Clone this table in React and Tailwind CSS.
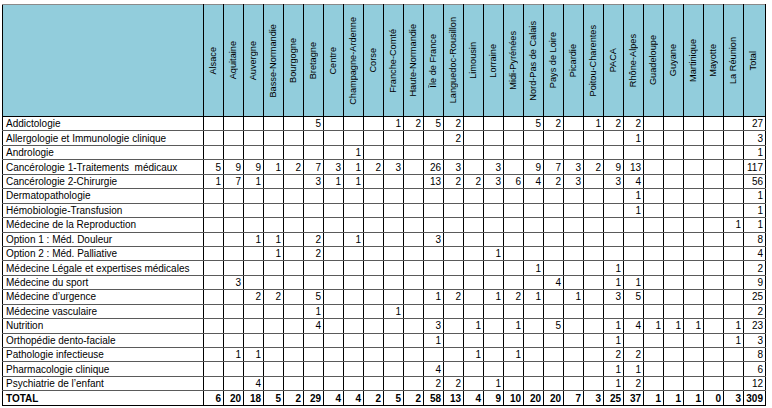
import React from "react";

const regions = [
  "Alsace",
  "Aquitaine",
  "Auvergne",
  "Basse-Normandie",
  "Bourgogne",
  "Bretagne",
  "Centre",
  "Champagne-Ardenne",
  "Corse",
  "Franche-Comté",
  "Haute-Normandie",
  "Île de France",
  "Languedoc-Rousillon",
  "Limousin",
  "Lorraine",
  "Midi-Pyrénées",
  "Nord-Pas de Calais",
  "Pays de Loire",
  "Picardie",
  "Poitou-Charentes",
  "PACA",
  "Rhône-Alpes",
  "Guadeloupe",
  "Guyane",
  "Martinique",
  "Mayotte",
  "La Réunion",
];

// values keyed by region position (1-based), blanks left out
const rows = [
  ["Addictologie", { 6: 5, 10: 1, 11: 2, 12: 5, 13: 2, 17: 5, 18: 2, 20: 1, 21: 2, 22: 2 }, 27],
  ["Allergologie et Immunologie clinique", { 13: 2, 22: 1 }, 3],
  ["Andrologie", { 8: 1 }, 1],
  [
    "Cancérologie 1-Traitements  médicaux",
    { 1: 5, 2: 9, 3: 9, 4: 1, 5: 2, 6: 7, 7: 3, 8: 1, 9: 2, 10: 3, 12: 26, 13: 3, 15: 3, 17: 9, 18: 7, 19: 3, 20: 2, 21: 9, 22: 13 },
    117,
  ],
  [
    "Cancérologie 2-Chirurgie",
    { 1: 1, 2: 7, 3: 1, 6: 3, 7: 1, 8: 1, 12: 13, 13: 2, 14: 2, 15: 3, 16: 6, 17: 4, 18: 2, 19: 3, 21: 3, 22: 4 },
    56,
  ],
  ["Dermatopathologie", { 22: 1 }, 1],
  ["Hémobiologie-Transfusion", { 22: 1 }, 1],
  ["Médecine de la Reproduction", { 27: 1 }, 1],
  ["Option 1 : Méd. Douleur", { 3: 1, 4: 1, 6: 2, 8: 1, 12: 3 }, 8],
  ["Option 2 : Méd. Palliative", { 4: 1, 6: 2, 15: 1 }, 4],
  ["Médecine Légale et expertises médicales", { 17: 1, 21: 1 }, 2],
  ["Médecine du sport", { 2: 3, 18: 4, 21: 1, 22: 1 }, 9],
  [
    "Médecine d’urgence",
    { 3: 2, 4: 2, 6: 5, 12: 1, 13: 2, 15: 1, 16: 2, 17: 1, 19: 1, 21: 3, 22: 5 },
    25,
  ],
  ["Médecine vasculaire", { 6: 1, 10: 1 }, 2],
  ["Nutrition", { 6: 4, 12: 3, 14: 1, 16: 1, 18: 5, 21: 1, 22: 4, 23: 1, 24: 1, 25: 1, 27: 1 }, 23],
  ["Orthopédie dento-faciale", { 12: 1, 21: 1, 27: 1 }, 3],
  ["Pathologie infectieuse", { 2: 1, 3: 1, 14: 1, 16: 1, 21: 2, 22: 2 }, 8],
  ["Pharmacologie clinique", { 12: 4, 21: 1, 22: 1 }, 6],
  ["Psychiatrie de l’enfant", { 3: 4, 12: 2, 13: 2, 15: 1, 21: 1, 22: 2 }, 12],
];

const totals = [6, 20, 18, 5, 2, 29, 4, 4, 2, 5, 2, 58, 13, 4, 9, 10, 20, 20, 7, 3, 25, 37, 1, 1, 1, 0, 3];

const VerticalLabel = ({ children }) => (
  <div className="mx-auto whitespace-nowrap rotate-180 [writing-mode:vertical-rl] leading-[19px]">
    {children}
  </div>
);

const App = () => {
  return (
    <div className="w-[772px] h-[408px] bg-white pt-[4px] pl-[2px] overflow-hidden font-['Liberation_Sans',Arial,sans-serif] text-[10px] text-black">
      <table className="w-[763px] table-fixed border-collapse border border-black border-t-[#8a8a8a]">
        <colgroup>
          <col className="w-[201px]" />
          {regions.map((r) => (
            <col key={r} className="w-[20px]" />
          ))}
          <col className="w-[22px]" />
        </colgroup>
        <thead>
          <tr className="h-[112px] bg-[#92cddc]">
            <th className="border border-black border-t-[#8a8a8a]" />
            {regions.map((r) => (
              <th
                key={r}
                className="border border-black border-t-[#8a8a8a] align-middle p-0 font-normal text-[9.2px]"
              >
                <VerticalLabel>{r}</VerticalLabel>
              </th>
            ))}
            <th className="border border-black border-t-[#8a8a8a] align-middle p-0 font-normal text-[9.2px]">
              <VerticalLabel>Total</VerticalLabel>
            </th>
          </tr>
        </thead>
        <tbody>
          {rows.map(([label, values, total]) => (
            <tr key={label} className="h-[14.45px] leading-[13px]">
              <td className="border-x border-black border-y border-y-[#5a5a5a] pl-[3px] p-0 whitespace-pre">
                {label}
              </td>
              {regions.map((r, i) => (
                <td
                  key={r}
                  className="border-x border-black border-y border-y-[#5a5a5a] p-0 pr-[2px] text-right"
                >
                  {values[i + 1] ?? ""}
                </td>
              ))}
              <td className="border-x border-black border-y border-y-[#5a5a5a] p-0 pr-[2px] text-right">
                {total}
              </td>
            </tr>
          ))}
          <tr className="h-[14.45px] leading-[13px] font-bold">
            <td className="border border-black pl-[3px] p-0">TOTAL</td>
            {totals.map((t, i) => (
              <td key={i} className="border border-black p-0 pr-[2px] text-right">
                {t}
              </td>
            ))}
            <td className="border border-black p-0 pr-[2px] text-right">309</td>
          </tr>
        </tbody>
      </table>
    </div>
  );
};

export default App;
